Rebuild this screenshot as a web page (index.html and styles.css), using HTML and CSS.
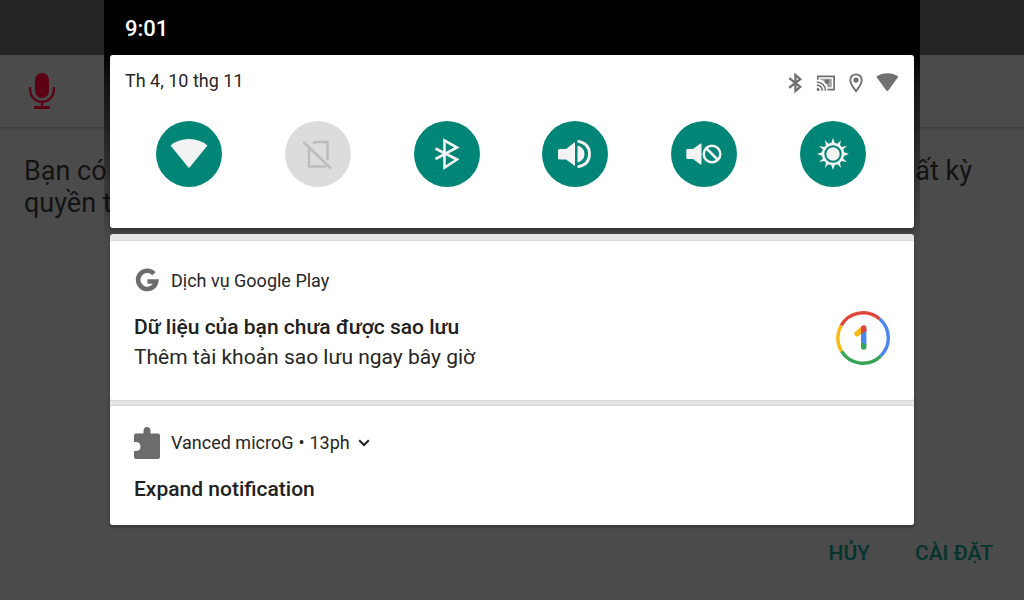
FILE: index.html
```
<!DOCTYPE html>
<html lang="vi">
<head>
<meta charset="utf-8">
<meta name="viewport" content="width=device-width, initial-scale=1">
<title>Thông báo</title>
<link rel="stylesheet" href="styles.css">
</head>
<body>
<main class="app">
  <div class="app-status"></div>
  <header class="app-bar">
    <svg class="mic" viewBox="0 0 26 38" aria-hidden="true"><rect x="6" y="1" width="14" height="25" rx="7"/><path d="M1.200 15v3.500a11.800 11.300 0 0 0 23.600 0V15M13 30v5" fill="none" stroke="currentColor" stroke-width="2.200"/><rect x="5" y="34" width="16" height="3" rx="1"/></svg>
  </header>
  <div class="message">
    <p class="line"><span>Bạn có</span><span>bất kỳ</span></p>
    <p class="line">quyền truy cập</p>
  </div>
  <div class="actions">
    <button class="action">HỦY</button>
    <button class="action">CÀI ĐẶT</button>
  </div>
</main>

<div class="shade">
  <div class="shade-head">
    <div class="clock">9:01</div>
  </div>
  <section class="quick">
    <div class="quick-top">
      <span>Th 4, 10 thg 11</span>
      <div class="status-icons">
        <svg viewBox="0 0 24 24" class="si"><path d="M6.500 7.500 18 16.500l-5 4.300V4.200l5 4.300L6.500 17.500" fill="none" stroke="currentColor" stroke-width="2.400"/></svg>
        <svg viewBox="0 0 24 24" class="si"><path d="M4 9V5.500h17v14h-7" fill="none" stroke="currentColor" stroke-width="1.800"/><path d="M6.500 8h12v9h-4C13 12 10 9.500 6.500 9z" opacity=".65"/><circle cx="13.500" cy="11" r="2.500"/><path d="M3 11.500A9 9 0 0 1 12 20.500M3 14.800a5.700 5.700 0 0 1 5.700 5.700" fill="none" stroke="currentColor" stroke-width="1.700"/><path d="M3 17.500a3 3 0 0 1 3 3H3z"/></svg>
        <svg viewBox="0 0 24 24" class="si"><path d="M11.500 3.500A6 6 0 0 0 5.500 9.500c0 4.500 6 11.500 6 11.500s6-7 6-11.500a6 6 0 0 0-6-6z" fill="none" stroke="currentColor" stroke-width="2"/><circle cx="11.500" cy="9.500" r="2.700"/></svg>
        <svg viewBox="0 0 24 24" class="si"><path d="M.3 6C7 1.300 17 1.300 23.300 6L13 20q-1.200 1.500-2.400 0z"/></svg>
      </div>
    </div>
    <div class="tiles">
      <button class="tile" aria-label="Wi-Fi"><svg viewBox="0 0 66 66"><path d="M14.500 24.500Q22 18 33 18t18.500 6.500L34 46q-1 1.300-2 0z"/></svg></button>
      <button class="tile off" aria-label="SIM"><svg viewBox="0 0 66 66"><g fill="none" stroke="currentColor" stroke-width="2.500"><path d="M28 22.500l2-1.500h12.500v18M24 26v19.500h17.500M18.500 21 46 47.500"/></g></svg></button>
      <button class="tile" aria-label="Bluetooth"><svg viewBox="0 0 66 66"><path d="M21.500 27.500 43 38.500 30.500 46.500V19.500L43 26.500 21.500 38" fill="none" stroke="currentColor" stroke-width="2.600"/></svg></button>
      <button class="tile" aria-label="Âm lượng"><svg viewBox="0 0 66 66"><path d="M17.500 28H24l9-7v24l-9-6.500h-6.500Q16 38.500 16 37v-7.500Q16 28 17.500 28zM35.500 24.500q7 2 7 8.500t-7 8.500z"/><path d="M35.500 20.200q12 2 12 12.800t-12 12.800" fill="none" stroke="currentColor" stroke-width="2.800"/></svg></button>
      <button class="tile" aria-label="Tắt tiếng"><svg viewBox="0 0 66 66"><path d="M16.500 28H22l7.500-5.500q1-.5 1 1v19q0 1.500-1 1L22 38h-5.500q-1.200 0-1.200-1v-8q0-1 1.200-1z"/><g fill="none" stroke="currentColor" stroke-width="2.500"><circle cx="41" cy="33" r="8.300"/><path d="m35 27 12 12"/></g></svg></button>
      <button class="tile" aria-label="Độ sáng"><svg viewBox="0 0 66 66"><path d="M33.000 17.000L35.200 23.200Q37.000 23.200 36.800 23.800L41.000 19.100L39.700 25.700L40.300 26.300L46.900 25.000L42.200 29.200Q42.800 30.000 42.800 30.800L49.000 33.000L42.800 35.200L42.200 36.800L46.900 41.000L40.300 39.700L39.700 40.300L41.000 46.900L36.800 42.200L35.200 42.800L33.000 49.000L30.800 42.800L29.200 42.200L25.000 46.900L26.300 40.300L25.700 39.700L19.100 41.000L23.800 36.800L23.200 35.200L17.000 33.000L23.200 30.800L23.800 29.200L19.100 25.000L25.700 26.300L26.300 25.700L25.000 19.100L29.200 23.800L30.800 23.200Z"/><circle cx="33" cy="33" r="11.200"/><circle cx="33" cy="33" r="7.700" fill="none" stroke="#008577" stroke-width="2"/></svg></button>
    </div>
  </section>
  <section class="notes">
    <article class="note">
      <div class="note-text">
        <div class="note-head">
          <svg class="note-icon" viewBox="0 0 26 32"><path d="M20 8.800A9.100 9.100 0 1 0 22.200 16.500H13.500" fill="none" stroke="currentColor" stroke-width="4.600"/></svg>
          <span>Dịch vụ Google Play</span>
        </div>
        <h2 class="title">Dữ liệu của bạn chưa được sao lưu</h2>
        <p class="text">Thêm tài khoản sao lưu ngay bây giờ</p>
      </div>
      <svg class="one" viewBox="0 0 54 54"><g fill="none" stroke-width="3.400"><path d="M5.200 14.500A25.200 25.200 0 0 1 43.700 8" stroke="#e04538"/><path d="M43.700 8a25.200 25.200 0 0 1 1 37" stroke="#4a86ee"/><path d="M44.700 45A25.200 25.200 0 0 1 5.500 40.200" stroke="#36a553"/><path d="M5.500 40.200a25.200 25.200 0 0 1-.3-25.700" stroke="#f6b916"/></g><g fill="none" stroke-width="5.400" stroke-linecap="round"><path d="M21 22.800 26 18.500" stroke="#f6b916"/><path d="M27.700 17v2" stroke="#e04538"/><path d="M27.700 33v3" stroke="#36a553"/></g><path d="M25 22.500 30.400 18.500v15.500L25 31z" fill="#4a86ee"/><path d="M25 17.500h5.400v2L25 23.500z" fill="#e04538"/></svg>
    </article>
    <article class="note small">
      <div class="note-text">
        <div class="note-head">
          <svg class="note-icon" viewBox="0 0 26 32"><path d="M2 6.500h7.500V4q0-4 3.500-4t3.500 4v2.500H24q2 0 2 2V30q0 2-2 2H2q-2 0-2-2v-6h2.500q4-.5 4-4.500t-4-4.500H0V8.500q0-2 2-2z"/></svg>
          <span>Vanced microG</span><span class="dot">•</span><span>13ph</span>
          <svg class="chev" viewBox="0 0 12 8"><path d="m1.200 1.200 4.800 4.800 4.800-4.800" fill="none" stroke="#222" stroke-width="2"/></svg>
        </div>
        <h2 class="title">Expand notification</h2>
      </div>
    </article>
  </section>
</div>
</body>
</html>
```
FILE: styles.css
```
* { box-sizing: border-box; }
body {
  margin: 0;
  font-family: Roboto, "Noto Sans", sans-serif;
  color: #262626;
  background: #4b4b4b;
}
h2, p { margin: 0; }
button { border: 0; padding: 0; font: inherit; }
svg { display: block; fill: currentColor; flex: none; }

.app {
  min-height: 100vh;
  display: flex;
  flex-direction: column;
  color: #131313;
}
.app-status { height: 55px; background: #252525; }
.app-bar {
  height: 72px;
  display: flex;
  align-items: center;
  padding: 0 29px;
  color: #5c0014;
  box-shadow: 0 1px 3px rgba(0, 0, 0, .2);
}
.mic { width: 26px; height: 38px; }
.message { padding: 28px 52px 0 24px; font-size: 27px; line-height: 32px; }
.line { display: flex; justify-content: space-between; }
.actions {
  margin-top: auto;
  display: flex;
  justify-content: flex-end;
  gap: 45px;
  padding: 0 31px 34px;
}
.action {
  background: none;
  color: #04332e;
  font-size: 21px;
  line-height: 26px;
  font-weight: 500;
}

.shade {
  position: absolute;
  top: 0;
  left: 0;
  right: 0;
  max-width: 816px;
  margin: 0 auto;
  padding: 0 6px;
  background: linear-gradient(#000 55px, rgba(0, 0, 0, .75) 80px, rgba(0, 0, 0, .2) 190px, transparent 245px);
}
.shade-head { height: 55px; padding: 16px 15px; color: #fff; }
.clock { font-size: 22px; line-height: 26px; font-weight: 500; }
.quick {
  background: #fff;
  border-radius: 3px;
  padding: 14px 15px 41px;
  box-shadow: 0 2px 6px rgba(0, 0, 0, .4);
}
.quick-top {
  display: flex;
  justify-content: space-between;
  font-size: 18px;
  line-height: 24px;
}
.status-icons { display: flex; gap: 8px; color: #707070; padding-top: 2px; }
.si { width: 23px; height: 23px; }
.tiles {
  display: grid;
  grid-template-columns: repeat(6, 1fr);
  justify-items: center;
  padding: 27px 2px 0 0;
}
.tile {
  width: 66px;
  height: 66px;
  border-radius: 50%;
  background: #008577;
  color: #f3f3f3;
}
.tile.off { background: #dcdcdc; color: #bcbcbc; }

.notes {
  margin-top: 6px;
  padding-top: 7px;
  display: grid;
  gap: 6px;
  background: #e4e4e4;
  border-radius: 3px;
  overflow: hidden;
  box-shadow: 0 2px 4px rgba(0, 0, 0, .3);
}
.note {
  display: flex;
  justify-content: space-between;
  align-items: center;
  background: #fff;
  padding: 24px 24px 28px;
  border-radius: 2px;
  box-shadow: 0 0 2px rgba(0, 0, 0, .2);
}
.note.small { padding: 21px 24px; }
.note-head {
  display: flex;
  align-items: center;
  font-size: 18px;
  line-height: 32px;
}
.note-icon { width: 26px; height: 32px; margin-right: 11px; color: #6c6c6c; }
.dot { padding: 0 5px; }
.chev { width: 12px; height: 8px; margin-left: 8px; }
.title { margin-top: 15px; font-size: 21px; line-height: 30px; font-weight: 500; color: #212121; }
.text { font-size: 21px; line-height: 30px; }
.one { width: 54px; height: 54px; margin-top: 38px; }
```
